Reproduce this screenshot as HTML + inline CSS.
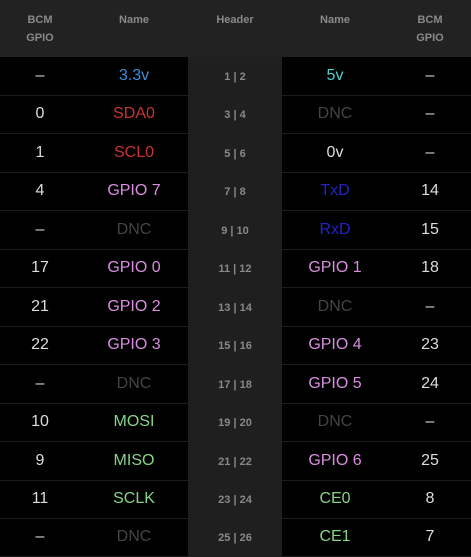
<!DOCTYPE html><html><head><style>
body{margin:0;width:471px;height:557px;background:#000;font-family:"Liberation Sans",sans-serif;overflow:hidden;position:relative}
.hd{position:absolute;left:0;top:0;width:471px;height:57px;background:#222}
.h{position:absolute;top:11px;width:90px;margin-left:-45px;text-align:center;color:#8a8a8a;font-size:11px;font-weight:bold;line-height:18px}
.mid{position:absolute;left:188px;top:57px;width:94px;height:500px;background:#1f1f1f}
.row{position:absolute;left:0;width:471px;height:38px;border-bottom:1px solid #1c1c1c}
.c{position:absolute;top:0;width:100px;margin-left:-50px;text-align:center;line-height:38px;font-size:16px;color:#ddd}
.p{font-size:11px;font-weight:bold;color:#888}
.b{color:#3a8fd8}.cy{color:#4cd0d0}.r{color:#c83232}.d{color:#444}.g{color:#d98ee0}.t{color:#2222c8}.gr{color:#86d486}
</style></head><body>
<div class="hd">
<div class="h" style="left:40px">BCM<br>GPIO</div>
<div class="h" style="left:134px">Name</div>
<div class="h" style="left:235px">Header</div>
<div class="h" style="left:335px">Name</div>
<div class="h" style="left:430px">BCM<br>GPIO</div>
</div>
<div class="mid"></div>
<div id="rows"></div>
<script>
var d=[["–","3.3v","b","1 | 2","5v","cy","–"],["0","SDA0","r","3 | 4","DNC","d","–"],["1","SCL0","r","5 | 6","0v","","–"],["4","GPIO 7","g","7 | 8","TxD","t","14"],["–","DNC","d","9 | 10","RxD","t","15"],["17","GPIO 0","g","11 | 12","GPIO 1","g","18"],["21","GPIO 2","g","13 | 14","DNC","d","–"],["22","GPIO 3","g","15 | 16","GPIO 4","g","23"],["–","DNC","d","17 | 18","GPIO 5","g","24"],["10","MOSI","gr","19 | 20","DNC","d","–"],["9","MISO","gr","21 | 22","GPIO 6","g","25"],["11","SCLK","gr","23 | 24","CE0","gr","8"],["–","DNC","d","25 | 26","CE1","gr","7"]];
var h="";d.forEach(function(x,i){var t=57+i*38.45;
h+='<div class="row" style="top:'+t+'px"><div class="c" style="left:40px">'+x[0]+'</div><div class="c '+x[2]+'" style="left:134px">'+x[1]+'</div><div class="c '+x[5]+'" style="left:335px">'+x[4]+'</div><div class="c" style="left:430px">'+x[6]+'</div></div>';
h+='<div class="c p" style="left:235px;top:'+(t+1)+'px;position:absolute">'+x[3]+'</div>';});
document.getElementById("rows").innerHTML=h;
</script>
<style>.row{background:transparent}.mid{z-index:1}.p{z-index:2}</style>
</body></html>
